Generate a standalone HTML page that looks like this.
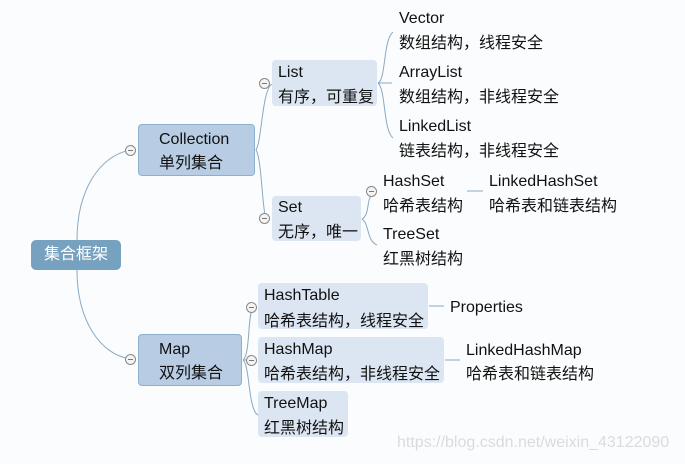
<!DOCTYPE html>
<html><head><meta charset="utf-8"><style>
body{margin:0;width:685px;height:464px;background:#fbfcfd;position:relative;overflow:hidden;font-family:"Liberation Sans","Noto Sans CJK SC",sans-serif;color:#111;}
.t{position:absolute;font-size:16px;line-height:24px;white-space:nowrap;}
.b{position:absolute;border-radius:4px;}
.c{position:absolute;width:9px;height:9px;border:1px solid #888;border-radius:50%;background:#f4f4f4;}
.c:after{content:"";position:absolute;left:2px;right:2px;top:4px;height:1px;background:#777;}
</style></head><body>
<svg width="685" height="464" style="position:absolute;left:0;top:0" fill="none" stroke="#8aa9c2" stroke-width="1">
<path d="M77 240 C77 190 100 155 131 150"/>
<path d="M77 270 C77 320 100 355 131 359"/>
<path d="M256 150 C262 140 262 90 272 84"/>
<path d="M256 150 C262 160 262 210 266 218"/>
<path d="M378 83 C386 80 383 40 393 32"/>
<path d="M378 83 L392 83"/>
<path d="M378 83 C386 90 383 130 393 138"/>
<path d="M362 219 C370 215 366 200 372 195"/>
<path d="M362 219 C370 225 366 240 377 245"/>
<path d="M467 191 L483 191"/>
<path d="M243 360 C250 355 248 315 252 311"/>
<path d="M243 360 L252 360"/>
<path d="M243 360 C250 365 248 410 258 415"/>
<path d="M429 306 L444 306"/>
<path d="M445 360 L460 360"/>
</svg>
<div class="b" style="left:31px;top:240px;width:90px;height:30px;background:#77a2bf;border-radius:5px"></div>
<div class="t" style="left:44px;top:243px;color:#fff">集合框架</div>
<div class="b" style="left:138px;top:124px;width:115px;height:50px;background:#b8cce4;border:1px solid #8db0cf"></div>
<div class="t" style="left:159px;top:128px">Collection</div>
<div class="t" style="left:159px;top:152px">单列集合</div>
<div class="b" style="left:138px;top:334px;width:102px;height:50px;background:#b8cce4;border:1px solid #8db0cf"></div>
<div class="t" style="left:159px;top:338px">Map</div>
<div class="t" style="left:159px;top:362px">双列集合</div>
<div class="b" style="left:272px;top:60px;width:105px;height:46px;background:#dce6f2"></div>
<div class="t" style="left:278px;top:61px">List</div>
<div class="t" style="left:278px;top:86px">有序，可重复</div>
<div class="b" style="left:272px;top:196px;width:89px;height:45px;background:#dce6f2"></div>
<div class="t" style="left:278px;top:196px">Set</div>
<div class="t" style="left:278px;top:221px">无序，唯一</div>
<div class="t" style="left:399px;top:7px">Vector</div>
<div class="t" style="left:399px;top:32px">数组结构，线程安全</div>
<div class="t" style="left:399px;top:61px">ArrayList</div>
<div class="t" style="left:399px;top:86px">数组结构，非线程安全</div>
<div class="t" style="left:399px;top:115px">LinkedList</div>
<div class="t" style="left:399px;top:140px">链表结构，非线程安全</div>
<div class="t" style="left:383px;top:170px">HashSet</div>
<div class="t" style="left:383px;top:195px">哈希表结构</div>
<div class="t" style="left:489px;top:170px">LinkedHashSet</div>
<div class="t" style="left:489px;top:195px">哈希表和链表结构</div>
<div class="t" style="left:383px;top:223px">TreeSet</div>
<div class="t" style="left:383px;top:248px">红黑树结构</div>
<div class="b" style="left:258px;top:283px;width:170px;height:46px;background:#dce6f2"></div>
<div class="t" style="left:264px;top:284px">HashTable</div>
<div class="t" style="left:264px;top:310px">哈希表结构，线程安全</div>
<div class="b" style="left:258px;top:337px;width:186px;height:46px;background:#dce6f2"></div>
<div class="t" style="left:264px;top:338px">HashMap</div>
<div class="t" style="left:264px;top:363px">哈希表结构，非线程安全</div>
<div class="b" style="left:258px;top:391px;width:90px;height:46px;background:#dce6f2"></div>
<div class="t" style="left:264px;top:392px">TreeMap</div>
<div class="t" style="left:264px;top:417px">红黑树结构</div>
<div class="t" style="left:450px;top:296px">Properties</div>
<div class="t" style="left:466px;top:339px">LinkedHashMap</div>
<div class="t" style="left:466px;top:363px">哈希表和链表结构</div>
<div class="t" style="left:397px;top:431px;font-size:16px;color:#d8dce0">https://blog.csdn.net/weixin_43122090</div>
<div class="c" style="left:125px;top:145px"></div>
<div class="c" style="left:125px;top:354px"></div>
<div class="c" style="left:259px;top:78px"></div>
<div class="c" style="left:259px;top:213px"></div>
<div class="c" style="left:366px;top:186px"></div>
<div class="c" style="left:246px;top:302px"></div>
<div class="c" style="left:246px;top:355px"></div>
</body></html>
